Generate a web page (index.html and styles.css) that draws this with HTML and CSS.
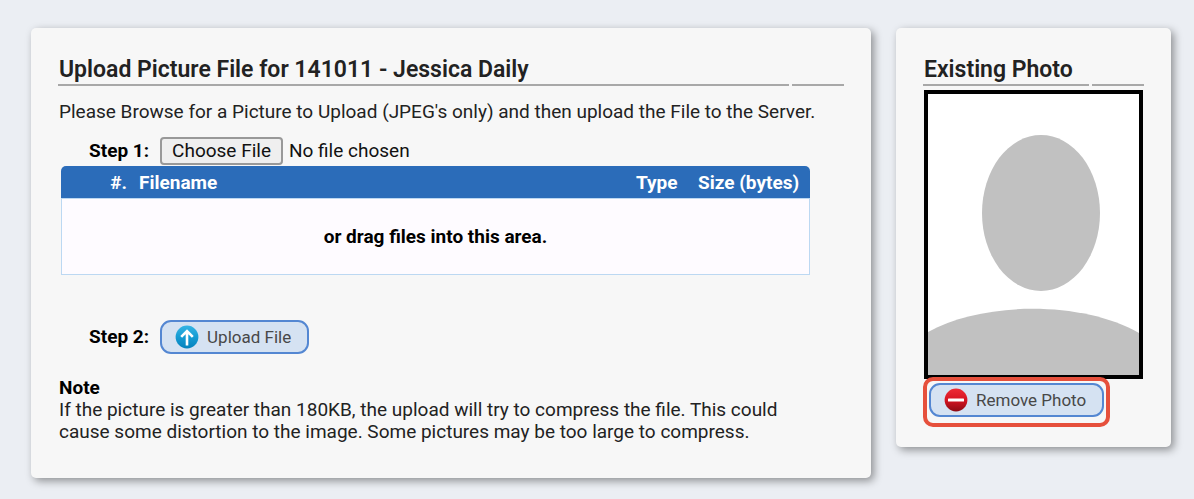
FILE: index.html
```
<!DOCTYPE html>
<html lang="en">
<head>
  <meta charset="UTF-8">
  <meta name="viewport" content="width=device-width, initial-scale=1.0">
  <title>Upload Picture</title>
  <link rel="stylesheet" href="styles.css">
</head>
<body>
  <main class="page">
    <section class="card">
      <header class="card-header">
        <h2>Upload Picture File for 141011 - Jessica Daily</h2>
        <div class="header-tools"></div>
      </header>
      <p class="intro">Please Browse for a Picture to Upload (JPEG's only) and then upload the File to the Server.</p>

      <form class="upload-form">
        <div class="step step-choose">
          <label for="pictureFile">Step 1:</label>
          <input type="file" id="pictureFile" accept="image/jpeg">
        </div>

        <table class="file-table">
          <thead>
            <tr>
              <th class="col-num">#.</th>
              <th class="col-name">Filename</th>
              <th class="col-type">Type</th>
              <th class="col-size">Size (bytes)</th>
            </tr>
          </thead>
          <tbody>
            <tr>
              <td class="drop-area" colspan="4">or drag files into this area.</td>
            </tr>
          </tbody>
        </table>

        <div class="step step-upload">
          <label for="uploadFile">Step 2:</label>
          <button type="button" class="btn" id="uploadFile">
            <svg width="24" height="24" viewBox="0 0 24 24" aria-hidden="true">
              <defs>
                <linearGradient id="blueFill" x1="0" y1="0" x2="0" y2="1">
                  <stop offset="0" stop-color="#35b4e4"/>
                  <stop offset="0.5" stop-color="#159bd3"/>
                  <stop offset="1" stop-color="#0582bd"/>
                </linearGradient>
              </defs>
              <circle cx="12" cy="12" r="11.4" fill="url(#blueFill)"/>
              <path d="M12 20.4V6M6.2 11.8L12 6l5.8 5.8" fill="none" stroke="#fff" stroke-width="2.6"/>
            </svg>
            Upload File
          </button>
        </div>
      </form>

      <div class="note">
        <h3>Note</h3>
        <p>If the picture is greater than 180KB, the upload will try to compress the file. This could cause some distortion to the image. Some pictures may be too large to compress.</p>
      </div>
    </section>

    <section class="card photo-card">
      <header class="card-header">
        <h2>Existing Photo</h2>
        <div class="header-tools"></div>
      </header>
      <svg class="photo" viewBox="0 0 211 281" role="img" aria-label="No photo">
        <rect width="211" height="281" fill="#fff"/>
        <ellipse cx="113" cy="119" rx="59" ry="78" fill="#c1c1c1"/>
        <path d="M0 238C56 207 155 207 211 239V281H0Z" fill="#c1c1c1"/>
      </svg>
      <div class="highlight">
        <button type="button" class="btn">
          <svg width="24" height="24" viewBox="0 0 24 24" aria-hidden="true">
            <defs>
              <linearGradient id="redFill" x1="0" y1="0" x2="0" y2="1">
                <stop offset="0" stop-color="#ee2b36"/>
                <stop offset="0.5" stop-color="#d51422"/>
                <stop offset="1" stop-color="#8e0b14"/>
              </linearGradient>
            </defs>
            <circle cx="12" cy="12" r="11.4" fill="url(#redFill)"/>
            <rect x="4" y="10.5" width="16" height="3" rx="0.6" fill="#fff"/>
          </svg>
          Remove Photo
        </button>
      </div>
    </section>
  </main>
</body>
</html>
```
FILE: styles.css
```
* {
  box-sizing: border-box;
}
body {
  margin: 0;
  background-color: #ebeef3;
  color: #222;
  font-family: Roboto, "Liberation Sans", sans-serif;
  font-size: 19px;
  line-height: 22px;
}
h2,
h3,
p {
  margin: 0;
}
.page {
  display: grid;
  grid-template-columns: 840fr 275fr;
  gap: 25px;
  align-items: start;
  padding: 28px 23px 21px 31px;
}
.card {
  min-width: 0;
  padding: 28px 28px 35px;
  border-radius: 5px;
  background-color: #f7f7f7;
  box-shadow: 3px 3px 8px rgba(0, 0, 0, 0.4);
}
.card-header {
  display: flex;
  gap: 3px;
  margin: 0 -1px;
}
.card-header h2 {
  flex: 1;
  padding: 0 1px;
  border-bottom: 2px solid #a8a8a8;
  font-size: 23px;
  font-weight: 600;
  line-height: 28px;
}
.header-tools {
  width: 52px;
  border-bottom: 2px solid #a8a8a8;
}
.intro {
  padding: 15px 0 14px;
}
.step {
  display: flex;
  align-items: center;
  gap: 11px;
  padding-left: 30px;
}
.step label {
  color: #000;
  font-weight: 700;
}
.step input {
  color: #111;
  font-family: inherit;
  font-size: 19px;
  line-height: 22px;
}
.step input::file-selector-button {
  margin-right: 6px;
  padding: 1px 10px;
  border: 2px solid #999;
  border-radius: 4px;
  background-color: #efefef;
  color: #111;
  font-family: inherit;
  font-size: 19px;
  line-height: 22px;
}
.step-choose {
  padding-bottom: 1px;
}
.file-table {
  width: calc(100% - 35px);
  margin-left: 2px;
  border-spacing: 0;
}
.file-table th {
  height: 32px;
  padding: 2px 7px 0 12px;
  background-color: #2b6cb9;
  color: #fff;
  text-align: left;
}
.file-table .col-num {
  width: 66px;
  padding: 2px 0 0;
  border-top-left-radius: 5px;
  text-align: right;
}
.file-table .col-type {
  width: 62px;
}
.file-table .col-size {
  width: 124px;
  border-top-right-radius: 5px;
  white-space: nowrap;
}
.drop-area {
  height: 77px;
  padding: 0;
  border: 1px solid #bcd8f2;
  background-color: #fefbff;
  color: #000;
  font-weight: 700;
  text-align: center;
}
.step-upload {
  padding-top: 45px;
}
.btn {
  display: flex;
  align-items: center;
  gap: 8px;
  height: 34px;
  padding: 0 16px 0 13px;
  border: 2px solid #5487d2;
  border-radius: 11px;
  background-color: #d5e2f2;
  color: #484848;
  font-family: inherit;
  font-size: 17px;
  cursor: pointer;
}
.btn:hover {
  background-color: #c5d8ef;
}
.note {
  max-width: 96%;
  padding-top: 23px;
}
.note h3 {
  color: #000;
  font-size: 19px;
  font-weight: 700;
}
.photo-card {
  padding-bottom: 20px;
}
.photo {
  display: block;
  width: 100%;
  margin-top: 4px;
  border: 4px solid #000;
}
/* red outline around the remove button, overlaps the photo frame */
.highlight {
  position: relative;
  width: fit-content;
  margin: -2px 0 0 -1px;
  padding: 2px 2px 6px;
  border: 4px solid #e6503c;
  border-radius: 10px;
}
```
